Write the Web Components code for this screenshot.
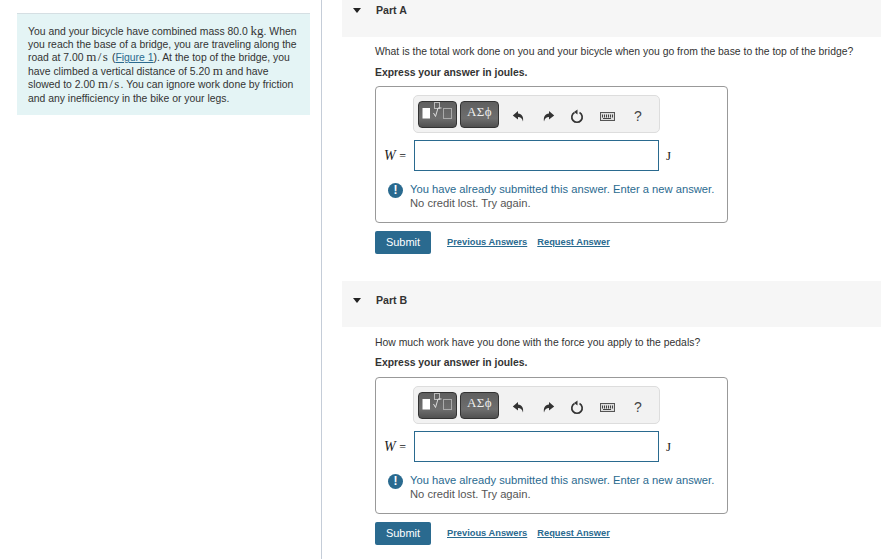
<!DOCTYPE html>
<html><head><meta charset="utf-8">
<style>
html,body{margin:0;padding:0;background:#fff;height:559px;overflow:hidden}
body{font-family:"Liberation Sans",Arial,sans-serif;color:#333}
</style></head><body>
<quiz-page>
<intro-box slot="side">You and your bicycle have combined mass 80.0 <m-v>kg</m-v>. When you reach the base of a bridge, you are traveling along the road at 7.00 <m-v wide>m/s</m-v> (<a>Figure 1</a>). At the top of the bridge, you have climbed a vertical distance of 5.20 <m-v>m</m-v> and have slowed to 2.00 <m-v wide>m/s</m-v>. You can ignore work done by friction and any inefficiency in the bike or your legs.</intro-box>
<quiz-part first name="Part A" question="What is the total work done on you and your bicycle when you go from the base to the top of the bridge?"></quiz-part>
<quiz-part name="Part B" question="How much work have you done with the force you apply to the pedals?"></quiz-part>
</quiz-page>
<script>
customElements.define('quiz-page',class extends HTMLElement{constructor(){super();this.attachShadow({mode:'open'}).innerHTML=`<style>
:host{display:flex;width:881px;height:559px;overflow:hidden}
.side{box-sizing:border-box;width:322px;flex:none;border-right:1px solid #c5cdd8;padding:13px 11px 0 17px}
.main{flex:1;min-width:0;padding-left:20px;margin-top:-10px}
</style><div class="side"><slot name="side"></slot></div><div class="main"><slot></slot></div>`}});
customElements.define('m-v',class extends HTMLElement{constructor(){super();this.attachShadow({mode:'open'}).innerHTML=`<style>:host{display:inline;font-family:"Liberation Serif",serif;font-size:13px;line-height:0}:host([wide]){letter-spacing:1.3px}</style><slot></slot>`}});
customElements.define('intro-box',class extends HTMLElement{constructor(){super();this.attachShadow({mode:'open'}).innerHTML=`<style>
:host{display:block;box-sizing:border-box;height:102px;background:#e4f4f5;border-top:1px solid #d5dfe3;padding:10.5px 8px 0 11px;font-size:10.4px;line-height:13.4px;color:#333}
::slotted(a){color:#2a6a8f;text-decoration:underline}
</style><slot></slot>`}});
customElements.define('tool-bar',class extends HTMLElement{constructor(){super();this.attachShadow({mode:'open'}).innerHTML=`<style>
:host{display:flex;align-items:flex-start;box-sizing:border-box;width:247px;height:38px;background:#f2f2f2;border:1px solid #ddd;border-radius:5px;padding:5px 0 0 4px;margin-left:37px}
.b{box-sizing:border-box;width:39px;height:27px;border-radius:4px;border:1px solid #333;background:linear-gradient(#5f5f5f,#6e6e6e 65%,#505050);color:#eee;margin-right:3px;flex:none;display:flex;justify-content:center}
.g{font:13px/19px "Liberation Serif",serif;color:#eee;letter-spacing:.4px}
.ic{flex:none;display:flex;align-items:center;justify-content:center;height:26px;margin-top:2px}
.q{font-size:14px;color:#444}
svg{display:block}
</style>
<div class="b"><svg width="37" height="25" viewBox="0 0 37 25"><rect x="3.500" y="6" width="7.500" height="10.500" fill="#fff"/><rect x="15.500" y=".5" width="5" height="6" fill="none" stroke="#bbb"/><path d="M14.500 11l2 3.500 2.500-8.500h3.500" fill="none" stroke="#ddd"/><rect x="24.500" y="6.500" width="8" height="10" fill="none" stroke="#aaa"/></svg></div>
<div class="b"><span class="g">ΑΣϕ</span></div>
<div class="ic" style="margin-left:8px;width:16px"><svg width="13" height="13" viewBox="0 0 13 13"><path d="M6 1L.8 5.500 6 9.500V7c2.500 0 4 1 5 4.500 .7-4.500-1-7.500-5-8z" fill="#333"/></svg></div>
<div class="ic" style="margin-left:14px;width:16px"><svg width="13" height="13" viewBox="0 0 13 13"><path d="M7 1l5.200 4.500L7 9.500V7c-2.500 0-4 1-5 4.500C1.300 7 3 4 7 3.500z" fill="#333"/></svg></div>
<div class="ic" style="margin-left:13px;width:16px"><svg width="14" height="15" viewBox="0 0 14 15"><path d="M4.500 3.500a5.200 5.200 0 1 0 5 0" fill="none" stroke="#333" stroke-width="1.700"/><path d="M7.500 0.500v5l-3.500-2.500z" fill="#333"/></svg></div>
<div class="ic" style="margin-left:14px;width:16px"><svg width="15" height="9" viewBox="0 0 15 9"><rect x=".5" y=".5" width="14" height="8" fill="#ddd" stroke="#555"/><path d="M2 2.500h1v3H2zM4 2.500h1v3H4zM6 2.500h1v3H6zM8 2.500h1v3H8zM10 2.500h1v3h-1zM12 2.500h1v3h-1zM3 6h8v1H3z" fill="#444"/></svg></div>
<div class="ic q" style="margin-left:16px;width:14px">?</div>`}});
customElements.define('quiz-part',class extends HTMLElement{constructor(){super();this.attachShadow({mode:'open'}).innerHTML=`<style>
:host{display:block;box-sizing:border-box;height:291px;font-size:10.4px;color:#333}
.h{box-sizing:border-box;height:46px;background:#f6f6f6;display:flex;align-items:flex-start;padding:12px 0 0 11px;font-weight:bold;font-size:10.6px;line-height:14px}
:host([first]) .h{height:47px;padding-top:13px}
:host([first]) .q{margin-top:8px}
:host([first]) .e{margin-top:7px}
:host([first]) .box{margin-top:6px}
.tri{width:0;height:0;border:4px solid transparent;border-top:5px solid #222;border-bottom:0;margin:5px 15px 0 0}
.body{padding:0 0 0 33px}
.q{margin:9px 0 0;line-height:14px;height:14px;white-space:nowrap}
.e{margin:6px 0 0;font-weight:bold;line-height:14px;height:14px}
.box{box-sizing:border-box;width:353px;height:137px;margin-top:7px;border:1px solid #999;border-radius:4px;padding:8px 0 0 0}
.row{display:flex;align-items:center;height:31px;margin-top:7px;padding-left:8px}
.w{font:italic 14px "Liberation Serif",serif;width:30px;flex:none;color:#222;white-space:nowrap;padding-top:1px}
.w span{font-style:normal;font-size:12px}
.in{box-sizing:border-box;width:245px;height:31px;border:1px solid #2a6a8f;background:#fff;flex:none}
.u{font:13px "Liberation Serif",serif;margin-left:7px;color:#222;padding-top:1px}
.al{display:flex;margin:11px 0 0 12px;line-height:14px;font-size:11.2px;color:#555}
.ic{width:15px;height:15px;border-radius:50%;background:#2a6a8f;color:#fff;font:bold 12px/15px "Liberation Sans",sans-serif;text-align:center;flex:none;margin:1px 7px 0 0}
.al b{font-weight:normal;color:#2a6a8f;display:block}
.al div{white-space:nowrap}
.act{display:flex;align-items:center;margin-top:8px}
.sub{box-sizing:border-box;width:56px;height:23px;background:#2a6a8f;color:#fff;border-radius:2px;text-align:center;font-size:11px;line-height:23px;margin-right:16px}
.l{font-weight:bold;font-size:9.3px;color:#2a6a8f;text-decoration:underline;margin-right:10px;white-space:nowrap;position:relative;top:-1px}
</style>
<div class="h"><span class="tri"></span><span id="t"></span></div>
<div class="body"><p class="q" id="qq"></p><p class="e">Express your answer in joules.</p>
<div class="box"><tool-bar></tool-bar>
<div class="row"><div class="w">W <span>=</span></div><div class="in"></div><div class="u">J</div></div>
<div class="al"><div class="ic">!</div><div><b>You have already submitted this answer. Enter a new answer.</b>No credit lost. Try again.</div></div>
</div>
<div class="act"><div class="sub">Submit</div><span class="l">Previous Answers</span><span class="l">Request Answer</span></div>
</div>`}
connectedCallback(){this.shadowRoot.getElementById('t').textContent=this.getAttribute('name');this.shadowRoot.getElementById('qq').textContent=this.getAttribute('question')}});
</script>
</body></html>
